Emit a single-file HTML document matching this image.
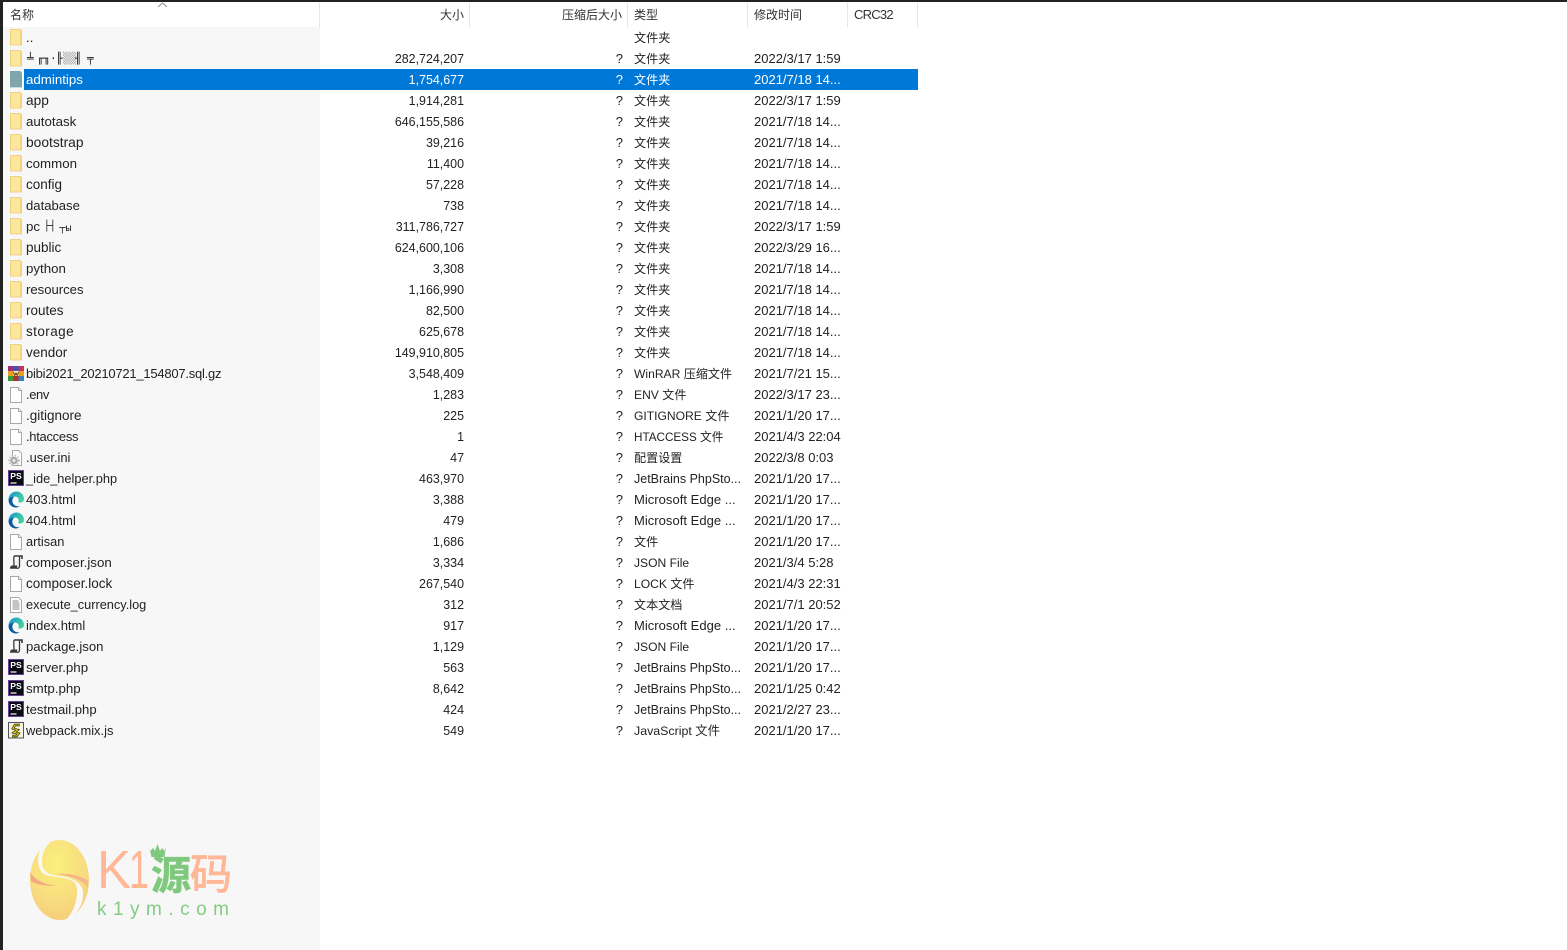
<!DOCTYPE html>
<html lang="zh"><head><meta charset="utf-8"><title>文件列表</title>
<style>
html,body{margin:0;padding:0;width:1567px;height:950px;overflow:hidden;background:#fff}
body{position:relative;font:13px "Liberation Sans","Noto Sans CJK SC",sans-serif;color:#222}
.top{position:absolute;left:0;top:0;width:1567px;height:2px;background:#222}
.left{position:absolute;left:0;top:0;width:3px;height:950px;background:#222}
.side{position:absolute;left:3px;top:27px;width:317px;height:923px;background:#f7f7f7}
.hd{position:absolute;top:5px;height:22px;line-height:21px;white-space:nowrap;color:#333;font-size:12px}
.dv{position:absolute;top:3px;width:1px;height:24px;background:#e6e6e6}
.list{position:absolute;left:0;top:27px;width:918px}
.r{position:relative;height:21px;line-height:21px;white-space:nowrap}
.r>span{position:absolute;top:0}
.r>span.s,.r>span.t{top:1px}
.r svg{position:absolute;left:8px;top:2px;width:16px;height:17px}
.n{left:26px;font-size:13.3px}
.s{right:454px;text-align:right;font-size:12.45px}
.q{right:295px}
.t{left:634px;font-size:12.1px}
.d{left:754px}
.sel{color:#fff}
.sel::before{content:"";position:absolute;left:24px;top:0;width:894px;height:21px;background:#0078d7}
.g{font-family:"DejaVu Sans Mono",monospace;font-size:11px}
.g i{position:absolute;top:0;font-style:normal}
.logo{position:absolute;left:0;top:0}
</style></head><body>
<svg width="0" height="0" style="position:absolute"><defs>
<linearGradient id="eb" x1="0" y1="0" x2="1" y2=".3"><stop offset="0" stop-color="#1a8fd6"/><stop offset="1" stop-color="#42d0a0"/></linearGradient>
<symbol id="fo" viewBox="0 0 16 17"><path d="M2.400.5h10l1.200 1.500v14H2.400z" fill="#fde79e" stroke="#ecc974" stroke-width=".8"/><path d="M12 1.500l1.300.8v13.300H12z" fill="#f9d77f"/></symbol>
<symbol id="fs" viewBox="0 0 16 17"><path d="M2 0h10.500L14 2v14.400H2z" fill="#7fa6ac"/></symbol>
<symbol id="fi" viewBox="0 0 16 17"><path d="M2.500 1.500h8l3 3v12h-11z" fill="#fff" stroke="#a8a8a8"/><path d="M10.500 1.500v3h3" fill="#f0f0f0" stroke="#a8a8a8"/></symbol>
<symbol id="lg" viewBox="0 0 16 17"><path d="M2.500 1.500h8l3 3v12h-11z" fill="#fff" stroke="#a8a8a8"/><path d="M4.500 5h6M4.500 7h7M4.500 9h7M4.500 11h7M4.500 13h7" stroke="#8a8a8a" fill="none"/></symbol>
<symbol id="ge" viewBox="0 0 16 17"><path d="M4.500 1.500h6l3 3v12h-9z" fill="#fff" stroke="#a8a8a8"/><circle cx="6" cy="11.500" r="3.800" fill="#a9a9a9"/><circle cx="6" cy="11.500" r="5" fill="none" stroke="#b8b8b8" stroke-width="1.500" stroke-dasharray="1.500 1.500"/><circle cx="6" cy="11.500" r="1.500" fill="#eee"/></symbol>
<symbol id="ps" viewBox="0 0 16 17"><rect x=".5" y=".5" width="15" height="15" fill="#0a0a14" stroke="#6b3fa0"/><path d="M2.500 13h6" stroke="#fff" stroke-width="1.200"/><text x="2.300" y="9" font-family="Liberation Sans" font-weight="700" font-size="8.500" fill="#fff" textLength="11.500" lengthAdjust="spacingAndGlyphs">PS</text></symbol>
<symbol id="ed" viewBox="0 0 16 17"><path d="M.5 9C.5 4 4 .5 8.500.500 13 .5 16 4 16 8c0 2.500-2 3.500-4 3.500-1.500 0-2-.7-1.500-1.500 1-1.500-.5-4.500-3.500-4.500S.5 8 .5 9z" fill="url(#eb)"/><path d="M.5 9c.5-2 3.500-3.500 6-3.500C5 6.500 4 8.500 4.500 11c.6 3 3.500 5 7.500 4-1.500 1-3 1.500-4 1.500C3.500 16.500.5 13 .5 9z" fill="#0c59a4"/></symbol>
<symbol id="js" viewBox="0 0 16 17"><g fill="none" stroke="#3a3a3a"><path d="M6 2h8v3" stroke-width="1.600"/><path d="M6 2c-.5 3 0 6 0 9.500" stroke-width="1.300"/><path d="M11.500 2.500V12c0 1.500-1.200 2.500-2.500 2.500" stroke-width="1.300"/></g><path d="M2 14.800c0-2 1-3.300 2-3.300h5.500c-.5 1-.5 2.300 0 3.300z" fill="#3a3a3a"/></symbol>
<symbol id="wp" viewBox="0 0 16 17"><rect x=".5" y=".5" width="15" height="15.500" fill="#f4f4dc" stroke="#555"/><path d="M12 3H7L5 6.500l4.500 1.500-3.500 2.500 4.500 1-2 2.500H4" fill="none" stroke="#222" stroke-width="2.400"/><path d="M12 3H7L5 6.500l4.500 1.500-3.500 2.500 4.500 1-2 2.500H4" fill="none" stroke="#e8d000" stroke-width="1.100"/></symbol>
<symbol id="ra" viewBox="0 0 16 17"><rect y="1" width="5.500" height="5" fill="#a02d7a"/><rect x="5.500" y="1" width="5" height="5" fill="#3f55b5"/><rect x="10.500" y="1" width="5.500" height="5" fill="#c9305a"/><rect y="6" width="16" height="5" fill="#e8a020"/><rect x="5.500" y="6" width="5" height="5" fill="#f5f0d8"/><rect y="11" width="5.500" height="5" fill="#3a9a3a"/><rect x="5.500" y="11" width="5" height="5" fill="#b03030"/><rect x="10.500" y="11" width="5.500" height="5" fill="#3a7fc0"/><path d="M5.500 7l1.300 3.500 1.200-2.500 1.200 2.500L10.500 7" fill="none" stroke="#7a3a12"/></symbol>
</defs></svg>
<div class="side"></div>
<div class="hd" style="left:10px">名称</div>
<svg style="position:absolute;left:157px;top:2px" width="11" height="6"><path d="M1 5l4.500-4 4.500 4" fill="none" stroke="#8a8a8a"/></svg>
<div class="hd" style="right:1103px">大小</div>
<div class="hd" style="right:945px">压缩后大小</div>
<div class="hd" style="left:634px">类型</div>
<div class="hd" style="left:754px">修改时间</div>
<div class="hd" style="left:854px;font-size:13px;letter-spacing:-.75px;top:4px">CRC32</div>
<div class="dv" style="left:319px"></div><div class="dv" style="left:469px"></div><div class="dv" style="left:627px"></div><div class="dv" style="left:747px"></div><div class="dv" style="left:847px"></div><div class="dv" style="left:917px"></div>
<div class="list">
<div class="r"><svg><use href="#fo"/></svg><span class="n">..</span><span class="t">文件夹</span></div>
<div class="r"><svg><use href="#fo"/></svg><span class="n g"><i style="left:1px">╧</i><i style="left:11px">╓╖</i><i style="left:24px">·</i><i style="left:30px">╟</i><i style="left:37px;color:#aaa">▒▒</i><i style="left:49px">╢</i><i style="left:61px">╤</i></span><span class="s">282,724,207</span><span class="q">?</span><span class="t">文件夹</span><span class="d">2022/3/17 1:59</span></div>
<div class="r sel"><svg><use href="#fs"/></svg><span class="n">admintips</span><span class="s">1,754,677</span><span class="q">?</span><span class="t">文件夹</span><span class="d">2021/7/18 14...</span></div>
<div class="r"><svg><use href="#fo"/></svg><span class="n" style="font-size:13.7px">app</span><span class="s">1,914,281</span><span class="q">?</span><span class="t">文件夹</span><span class="d">2022/3/17 1:59</span></div>
<div class="r"><svg><use href="#fo"/></svg><span class="n">autotask</span><span class="s">646,155,586</span><span class="q">?</span><span class="t">文件夹</span><span class="d">2021/7/18 14...</span></div>
<div class="r"><svg><use href="#fo"/></svg><span class="n" style="font-size:13.8px">bootstrap</span><span class="s">39,216</span><span class="q">?</span><span class="t">文件夹</span><span class="d">2021/7/18 14...</span></div>
<div class="r"><svg><use href="#fo"/></svg><span class="n">common</span><span class="s">11,400</span><span class="q">?</span><span class="t">文件夹</span><span class="d">2021/7/18 14...</span></div>
<div class="r"><svg><use href="#fo"/></svg><span class="n" style="font-size:13.5px">config</span><span class="s">57,228</span><span class="q">?</span><span class="t">文件夹</span><span class="d">2021/7/18 14...</span></div>
<div class="r"><svg><use href="#fo"/></svg><span class="n" style="font-size:13.1px">database</span><span class="s">738</span><span class="q">?</span><span class="t">文件夹</span><span class="d">2021/7/18 14...</span></div>
<div class="r"><svg><use href="#fo"/></svg><span class="n">pc <span class="g" style="position:relative;top:-2px;font-size:10px">├┤</span> <span class="g" style="font-size:10px">┬ы</span></span><span class="s">311,786,727</span><span class="q">?</span><span class="t">文件夹</span><span class="d">2022/3/17 1:59</span></div>
<div class="r"><svg><use href="#fo"/></svg><span class="n" style="font-size:13.5px">public</span><span class="s">624,600,106</span><span class="q">?</span><span class="t">文件夹</span><span class="d">2022/3/29 16...</span></div>
<div class="r"><svg><use href="#fo"/></svg><span class="n">python</span><span class="s">3,308</span><span class="q">?</span><span class="t">文件夹</span><span class="d">2021/7/18 14...</span></div>
<div class="r"><svg><use href="#fo"/></svg><span class="n" style="font-size:13.1px">resources</span><span class="s">1,166,990</span><span class="q">?</span><span class="t">文件夹</span><span class="d">2021/7/18 14...</span></div>
<div class="r"><svg><use href="#fo"/></svg><span class="n" style="font-size:13.5px">routes</span><span class="s">82,500</span><span class="q">?</span><span class="t">文件夹</span><span class="d">2021/7/18 14...</span></div>
<div class="r"><svg><use href="#fo"/></svg><span class="n" style="font-size:13.5px;letter-spacing:.43px">storage</span><span class="s">625,678</span><span class="q">?</span><span class="t">文件夹</span><span class="d">2021/7/18 14...</span></div>
<div class="r"><svg><use href="#fo"/></svg><span class="n" style="font-size:13.5px">vendor</span><span class="s">149,910,805</span><span class="q">?</span><span class="t">文件夹</span><span class="d">2021/7/18 14...</span></div>
<div class="r"><svg><use href="#ra"/></svg><span class="n" style="font-size:13px;letter-spacing:-.23px">bibi2021_20210721_154807.sql.gz</span><span class="s">3,548,409</span><span class="q">?</span><span class="t">WinRAR 压缩文件</span><span class="d">2021/7/21 15...</span></div>
<div class="r"><svg><use href="#fi"/></svg><span class="n" style="font-size:13px;letter-spacing:-.4px">.env</span><span class="s">1,283</span><span class="q">?</span><span class="t">ENV 文件</span><span class="d">2022/3/17 23...</span></div>
<div class="r"><svg><use href="#fi"/></svg><span class="n" style="font-size:13.5px">.gitignore</span><span class="s">225</span><span class="q">?</span><span class="t">GITIGNORE 文件</span><span class="d">2021/1/20 17...</span></div>
<div class="r"><svg><use href="#fi"/></svg><span class="n" style="font-size:13px;letter-spacing:-.3px">.htaccess</span><span class="s">1</span><span class="q">?</span><span class="t" style="font-size:11.7px">HTACCESS 文件</span><span class="d">2021/4/3 22:04</span></div>
<div class="r"><svg><use href="#ge"/></svg><span class="n" style="font-size:12.9px">.user.ini</span><span class="s">47</span><span class="q">?</span><span class="t">配置设置</span><span class="d">2022/3/8 0:03</span></div>
<div class="r"><svg><use href="#ps"/></svg><span class="n" style="font-size:12.8px">_ide_helper.php</span><span class="s">463,970</span><span class="q">?</span><span class="t" style="font-size:12.5px">JetBrains PhpSto...</span><span class="d">2021/1/20 17...</span></div>
<div class="r"><svg><use href="#ed"/></svg><span class="n" style="font-size:13px">403.html</span><span class="s">3,388</span><span class="q">?</span><span class="t" style="font-size:13px;letter-spacing:.03px;top:0">Microsoft Edge ...</span><span class="d">2021/1/20 17...</span></div>
<div class="r"><svg><use href="#ed"/></svg><span class="n" style="font-size:13px">404.html</span><span class="s">479</span><span class="q">?</span><span class="t" style="font-size:13px;letter-spacing:.03px;top:0">Microsoft Edge ...</span><span class="d">2021/1/20 17...</span></div>
<div class="r"><svg><use href="#fi"/></svg><span class="n" style="font-size:12.8px">artisan</span><span class="s">1,686</span><span class="q">?</span><span class="t">文件</span><span class="d">2021/1/20 17...</span></div>
<div class="r"><svg><use href="#js"/></svg><span class="n">composer.json</span><span class="s">3,334</span><span class="q">?</span><span class="t">JSON File</span><span class="d">2021/3/4 5:28</span></div>
<div class="r"><svg><use href="#fi"/></svg><span class="n" style="font-size:13.5px">composer.lock</span><span class="s">267,540</span><span class="q">?</span><span class="t">LOCK 文件</span><span class="d">2021/4/3 22:31</span></div>
<div class="r"><svg><use href="#lg"/></svg><span class="n" style="font-size:12.75px">execute_currency.log</span><span class="s">312</span><span class="q">?</span><span class="t">文本文档</span><span class="d">2021/7/1 20:52</span></div>
<div class="r"><svg><use href="#ed"/></svg><span class="n" style="font-size:13px">index.html</span><span class="s">917</span><span class="q">?</span><span class="t" style="font-size:13px;letter-spacing:.03px;top:0">Microsoft Edge ...</span><span class="d">2021/1/20 17...</span></div>
<div class="r"><svg><use href="#js"/></svg><span class="n" style="font-size:13.15px">package.json</span><span class="s">1,129</span><span class="q">?</span><span class="t">JSON File</span><span class="d">2021/1/20 17...</span></div>
<div class="r"><svg><use href="#ps"/></svg><span class="n">server.php</span><span class="s">563</span><span class="q">?</span><span class="t" style="font-size:12.5px">JetBrains PhpSto...</span><span class="d">2021/1/20 17...</span></div>
<div class="r"><svg><use href="#ps"/></svg><span class="n">smtp.php</span><span class="s">8,642</span><span class="q">?</span><span class="t" style="font-size:12.5px">JetBrains PhpSto...</span><span class="d">2021/1/25 0:42</span></div>
<div class="r"><svg><use href="#ps"/></svg><span class="n" style="font-size:13.1px">testmail.php</span><span class="s">424</span><span class="q">?</span><span class="t" style="font-size:12.5px">JetBrains PhpSto...</span><span class="d">2021/2/27 23...</span></div>
<div class="r"><svg><use href="#wp"/></svg><span class="n" style="font-size:12.9px">webpack.mix.js</span><span class="s">549</span><span class="q">?</span><span class="t" style="font-size:12.4px">JavaScript 文件</span><span class="d">2021/1/20 17...</span></div>
</div>
<svg class="logo" width="320" height="950" style="pointer-events:none">
<defs><radialGradient id="eg" cx=".45" cy=".3" r=".8"><stop offset="0" stop-color="#faf07c"/><stop offset=".6" stop-color="#f8dc80"/><stop offset="1" stop-color="#f4c878"/></radialGradient>
<linearGradient id="sg" x1="0" y1="0" x2="1" y2="0"><stop offset="0" stop-color="#f3a07e"/><stop offset="1" stop-color="#f4b48c"/></linearGradient></defs>
<ellipse cx="59.500" cy="880" rx="29.500" ry="40" fill="url(#eg)"/>
<path d="M45 842C36 852 36 868 44 874c8 4 22 2 30 8 6 6 3 26-8 38 14-6 18-20 17-29-2-10-14-14-24-15-10-1-17-4-17-14 0-9 3-15 8-19z" fill="#f9f8f4"/>
<path d="M30 872c6 10 16 12 26 14-9 0-20-1-25-5zM88 888c-3-6-14-12-32-14 10-1 25 1 32 7z" fill="url(#sg)" opacity=".9"/>
<text x="97" y="888" font-family="Liberation Sans" font-size="54" fill="#ffb796" textLength="34" lengthAdjust="spacingAndGlyphs">K</text>
<text x="129" y="888" font-family="Liberation Sans" font-size="54" fill="#ffb796" textLength="20" lengthAdjust="spacingAndGlyphs">1</text>
<path d="M149 846l1.500 5 2.500-3 2 3 2.500-7 2.500 7 2-3 2.500 3 1.500-5-1.500 11h-13z" fill="#7fc97f"/>
<text x="151" y="889" font-family="Noto Sans CJK SC" font-weight="700" font-size="40" fill="#7fc97f" stroke="#7fc97f" stroke-width=".6">源</text>
<text x="190" y="889" font-family="Noto Sans CJK SC" font-size="42" fill="#ffb796" stroke="#ffb796" stroke-width="1">码</text>
<text x="97" y="915" font-family="Liberation Sans" font-size="19" fill="#84cc84" textLength="132">k1ym.com</text>
</svg>
<div class="top"></div><div class="left"></div>
</body></html>
